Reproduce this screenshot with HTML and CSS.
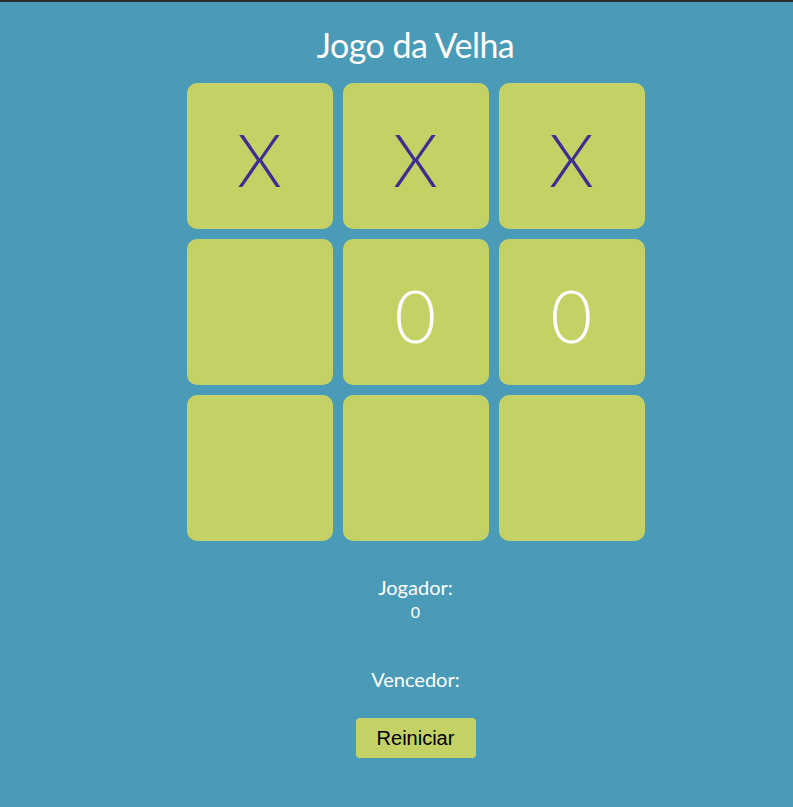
FILE: index.html
```html
<!DOCTYPE html>
<html lang="pt">
<head>
<meta charset="utf-8">
<title>Jogo da Velha</title>
<link rel="stylesheet" href="styles.css">
</head>
<body>
<main class="app">
  <h1 class="title">Jogo da Velha</h1>
  <div class="board">
    <div class="cell x">X</div>
    <div class="cell x">X</div>
    <div class="cell x">X</div>
    <div class="cell"></div>
    <div class="cell o">0</div>
    <div class="cell o">0</div>
    <div class="cell"></div>
    <div class="cell"></div>
    <div class="cell"></div>
  </div>
  <div class="info">
    <div class="label">Jogador:</div>
    <div class="value">0</div>
  </div>
  <div class="winner">
    <div class="label">Vencedor:</div>
  </div>
  <button class="reset">Reiniciar</button>
</main>
</body>
</html>
```
FILE: styles.css
```css
html, body {
  margin: 0;
  padding: 0;
}
body {
  background: #4a9bb7;
  border-top: 2px solid #2b2b2b;
  min-height: 805px;
  font-family: Lato, "Open Sans", sans-serif;
  color: #ffffff;
}
.app {
  padding-left: 38px;
  display: flex;
  flex-direction: column;
  align-items: center;
}
.title {
  margin: 22px 0 0;
  font-size: 34px;
  font-weight: 400;
  line-height: 42px;
  height: 59px;
  letter-spacing: -0.5px;
}
.board {
  display: grid;
  grid-template-columns: repeat(3, 146px);
  grid-auto-rows: 146px;
  gap: 10px;
}
.cell {
  background: #c3d165;
  border-radius: 10px;
  display: flex;
  align-items: center;
  justify-content: center;
  padding-top: 5px;
  box-sizing: border-box;
  font-size: 72px;
  font-weight: 300;
}
.x {
  color: #3f2e91;
}
.o {
  color: #ffffff;
}
.info {
  margin-top: 34px;
  text-align: center;
}
.label {
  font-size: 20px;
  line-height: 24px;
  font-weight: 400;
}
.value {
  font-size: 16px;
  line-height: 26px;
}
.winner {
  margin-top: 42px;
  text-align: center;
}
.reset {
  margin-top: 27px;
  width: 120px;
  height: 40px;
  border: none;
  border-radius: 4px;
  background: #c3d165;
  color: #000000;
  font-family: "Liberation Sans", Arial, sans-serif;
  font-size: 20px;
  padding: 0;
}
```
